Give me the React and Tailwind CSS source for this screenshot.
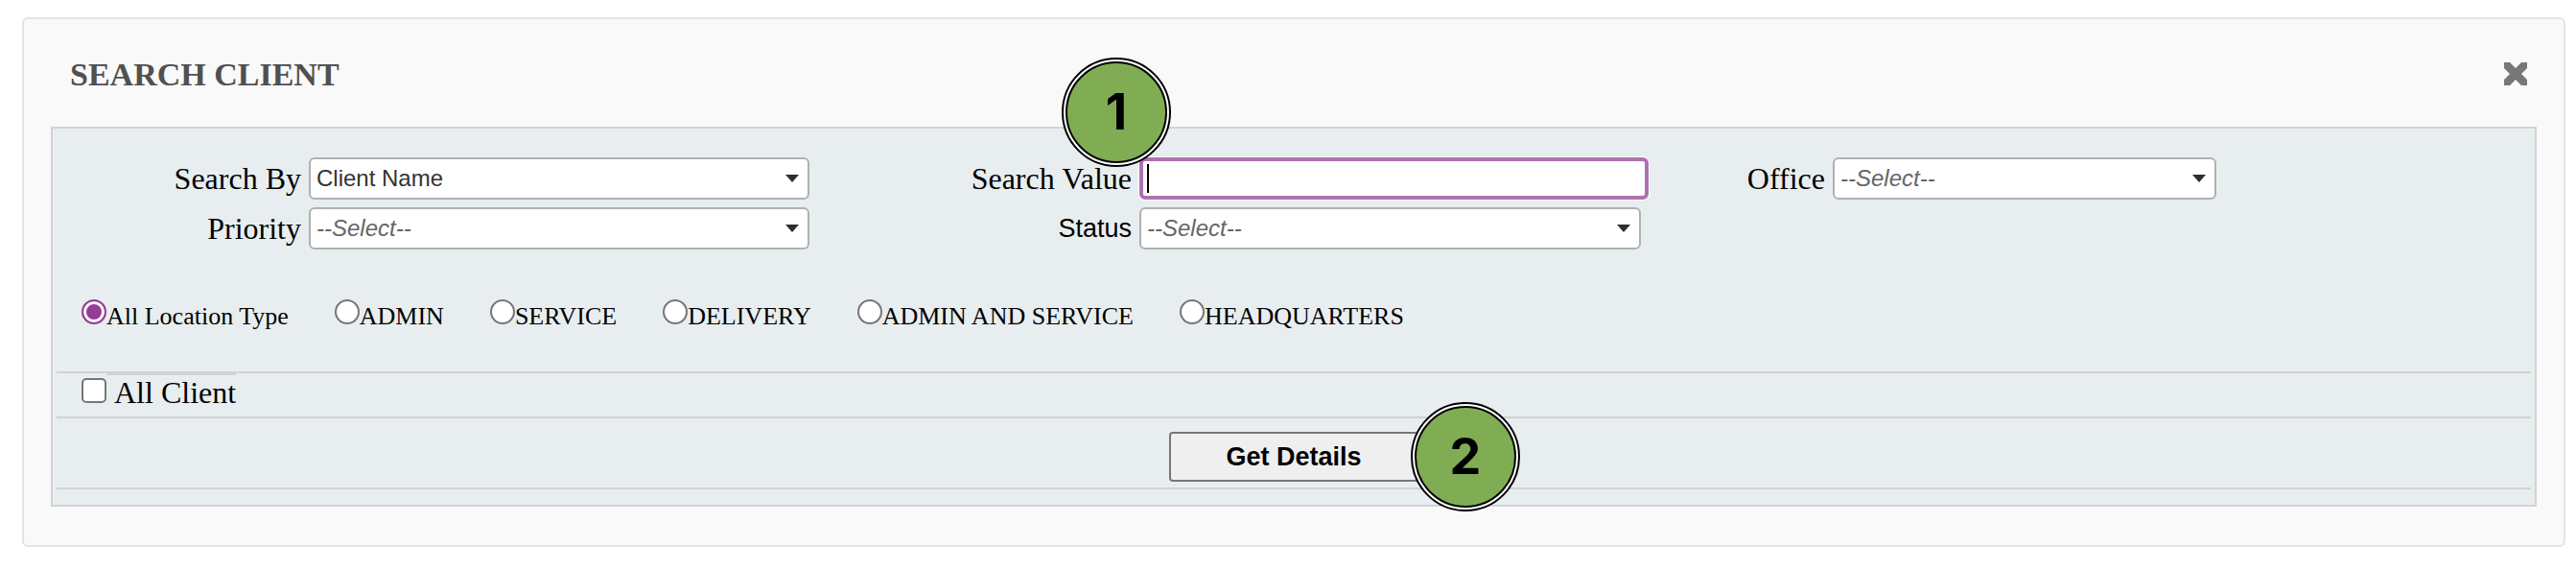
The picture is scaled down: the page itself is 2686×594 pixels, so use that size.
import React, { useState } from 'react';

const locationTypes = [
  'All Location Type',
  'ADMIN',
  'SERVICE',
  'DELIVERY',
  'ADMIN AND SERVICE',
  'HEADQUARTERS',
];

function FieldLabel({ htmlFor, children, className = 'text-[32px]' }) {
  return (
    <label htmlFor={htmlFor} className={`text-right whitespace-nowrap leading-9 ${className}`}>
      {children}
    </label>
  );
}

function Select({ id, options, className = '' }) {
  const [value, setValue] = useState(options[0]);
  const empty = value === '--Select--';

  return (
    <div className={`relative ${className}`}>
      <select
        id={id}
        value={value}
        onChange={e => setValue(e.target.value)}
        className={`block w-full h-11 pl-1.5 pr-10 appearance-none rounded-md border-2 border-[#b0b0b0] bg-white font-['Liberation_Sans',Arial,sans-serif] text-2xl ${
          empty ? 'italic text-[#666666]' : 'text-[#333333]'
        }`}
      >
        {options.map(option => (
          <option key={option}>{option}</option>
        ))}
      </select>
      <svg viewBox="0 0 14 8" className="absolute right-[11px] top-[18px] w-3.5 h-2 pointer-events-none" aria-hidden="true">
        <path d="M0 0h14L7 8z" fill="#2e2e2e" />
      </svg>
    </div>
  );
}

function StepBadge({ number, className }) {
  return (
    <span
      className={`absolute z-10 flex items-center justify-center w-[114px] h-[114px] rounded-full border-2 border-black bg-white p-0.5 ${className}`}
    >
      <span className="flex items-center justify-center w-full h-full rounded-full border-2 border-black bg-[#80ad53] font-[Inter,sans-serif] font-bold text-[52px] leading-none text-black">
        {number}
      </span>
    </span>
  );
}

function App() {
  const [location, setLocation] = useState(locationTypes[0]);
  const [allClient, setAllClient] = useState(false);
  const [searchValue, setSearchValue] = useState('');

  return (
    <div className="bg-white pt-[18px] pb-6 pl-[23px] pr-[11px] font-['Liberation_Serif','Times_New_Roman',serif] text-black">
      <div className="rounded-md border-2 border-[#e4e4e4] bg-[#f9f9f9] px-7 pb-10">
        {/* Header */}
        <div className="flex items-center justify-between h-28 pt-0.5 pl-5 pr-2.5">
          <h1 className="text-[34px] font-bold text-[#505050]">SEARCH CLIENT</h1>
          <button type="button" aria-label="Close" className="cursor-pointer">
            <svg viewBox="0 0 24 24" className="w-6 h-6">
              <path d="M0 0h6l6 6 6-6h6v6l-6 6 6 6v6h-6l-6-6-6 6H0v-6l6-6-6-6z" fill="#777777" />
            </svg>
          </button>
        </div>

        <form className="border-2 border-[#d2d2d2] bg-[#e8eef0] px-1 pb-4" onSubmit={e => e.preventDefault()}>
          {/* Search fields */}
          <div className="grid grid-cols-[255fr_522fr_328fr_531fr_176fr_728fr] items-center gap-2 pt-[30px]">
            <FieldLabel htmlFor="searchBy">Search By</FieldLabel>
            <Select id="searchBy" options={['Client Name']} />
            <FieldLabel htmlFor="searchValue">Search Value</FieldLabel>
            <div className="relative">
              <input
                id="searchValue"
                type="text"
                value={searchValue}
                onChange={e => setSearchValue(e.target.value)}
                className="block w-full h-11 px-1 rounded-md border-4 border-[#af72b0] bg-white ring-1 ring-white outline-none caret-transparent font-['Liberation_Sans',Arial,sans-serif] text-2xl"
              />
              {/* Text cursor */}
              <span className="absolute left-2 top-[7px] w-0.5 h-[30px] bg-black" />
              <StepBadge number={1} className="-left-[81px] -top-[104px]" />
            </div>
            <FieldLabel htmlFor="office">Office</FieldLabel>
            <Select id="office" options={['--Select--']} className="w-full max-w-[400px]" />

            <FieldLabel htmlFor="priority">Priority</FieldLabel>
            <Select id="priority" options={['--Select--']} />
            <FieldLabel
              htmlFor="status"
              className="font-['Liberation_Sans',Arial,sans-serif] text-[27px]"
            >
              Status
            </FieldLabel>
            <Select id="status" options={['--Select--']} className="mr-2" />
          </div>

          {/* Location types */}
          <div className="flex flex-wrap gap-x-12 h-[129px] pt-[50px] pl-[26px] border-b-2 border-[#d2d2d2]">
            {locationTypes.map(type => (
              <label key={type} className="flex items-baseline h-10 text-[26px] whitespace-nowrap">
                <input
                  type="radio"
                  name="locationType"
                  value={type}
                  checked={location === type}
                  onChange={() => setLocation(type)}
                  className="appearance-none w-[26px] h-[26px] rounded-full border-2 border-[#767676] bg-white checked:border-[#953d96] checked:bg-[#953d96] checked:shadow-[inset_0_0_0_3px_white]"
                />
                {type}
              </label>
            ))}
          </div>

          {/* All client */}
          <div className="h-[47px] pl-[26px] border-b-2 border-[#d2d2d2]">
            <div className="flex items-baseline">
              <input
                id="allClient"
                type="checkbox"
                checked={allClient}
                onChange={() => setAllClient(!allClient)}
                className="appearance-none w-[26px] h-[26px] rounded-[5px] border-2 border-[#767676] bg-white checked:bg-[#953d96]"
              />
              <label htmlFor="allClient" className="pl-2 border-t-2 border-[#d2d2d2] text-[32px] leading-9">
                All Client
              </label>
            </div>
          </div>

          <div className="flex justify-center h-[74px] pt-3.5 border-b-2 border-[#d2d2d2]">
            <div className="relative">
              <button
                type="submit"
                className="block w-[260px] h-[52px] rounded border-2 border-[#767676] bg-[#efefef] font-['Liberation_Sans',Arial,sans-serif] font-bold text-[27px] cursor-pointer"
              >
                Get Details
              </button>
              <StepBadge number={2} className="-right-[106px] -top-[31px]" />
            </div>
          </div>
        </form>
      </div>
    </div>
  );
}

export default App;
